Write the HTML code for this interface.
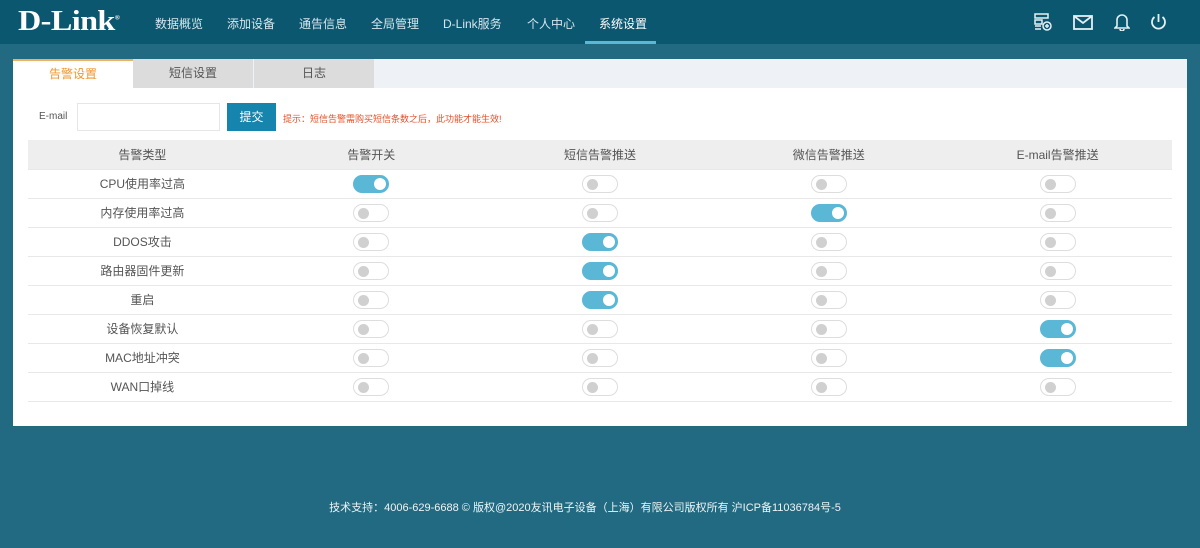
<!DOCTYPE html><html><head><meta charset="utf-8"><style>
*{margin:0;padding:0;box-sizing:border-box}
body{width:1200px;height:548px;background:#216a81;font-family:"Liberation Sans","Noto Sans CJK SC",sans-serif;position:relative;overflow:hidden}
.hd{position:absolute;left:0;top:0;width:1200px;height:44px;background:#0b5770}
.logo{position:absolute;left:18px;top:6px;color:#fff;font:bold 28px "Liberation Serif",serif;letter-spacing:-0.5px;transform:scaleX(1.15);transform-origin:left}
.nav{position:absolute;top:15px;font-size:12px;color:#d7e6ec}
.ul{position:absolute;left:585px;top:41px;width:71px;height:3px;background:#5cb6d4}
.ic{position:absolute;top:13px}
.panel{position:absolute;left:13px;top:59px;width:1174px;height:367px;background:#fff}
.tabs{position:absolute;left:0;top:0;width:1174px;height:29px;background:#eef1f5}
.tab{position:absolute;top:0;height:29px;width:120px;text-align:center;line-height:29px;font-size:12px;color:#555;background:#dcdcdc}
.lab{position:absolute;left:26px;top:52px;font-size:10px;color:#555}
.inp{position:absolute;left:64px;top:44px;width:143px;height:28px;border:1px solid #e6e6e6}
.btn{position:absolute;left:214px;top:44px;width:49px;height:28px;background:#1585ad;color:#fff;font-size:12px;text-align:center;line-height:28px}
.tip{position:absolute;left:270px;top:53px;font-size:9px;color:#e8502a}
table{position:absolute;left:15px;top:81px;width:1144px;border-collapse:collapse}
td,th{height:29px;width:20%;text-align:center;font-size:12px;color:#555;font-weight:normal;border-bottom:1px solid #e8e8e8;padding:0}
th{background:#eeeeee;height:29px}
.t{display:inline-block;vertical-align:middle;width:36px;height:18px;border-radius:9px;border:1px solid #ddd;background:#fff;position:relative}
.t:after{content:"";position:absolute;left:4px;top:3px;width:11px;height:11px;border-radius:50%;background:#d0d0d0}
.t.on{background:#5ab7d6;border-color:#5ab7d6}
.t.on:after{left:20px;background:#fff;width:12px;height:12px;top:2px}
.ft{position:absolute;top:499px;left:0;width:1170px;text-align:center;font-size:11px;color:#eef4f6}
</style></head><body>
<div class="hd">
<div class="logo">D-Link<sup style="font-size:6px">®</sup></div>
<span class="nav" style="left:155px">数据概览</span>
<span class="nav" style="left:227px">添加设备</span>
<span class="nav" style="left:299px">通告信息</span>
<span class="nav" style="left:371px">全局管理</span>
<span class="nav" style="left:443px">D-Link服务</span>
<span class="nav" style="left:527px">个人中心</span>
<span class="nav" style="left:599px;color:#fff">系统设置</span>
<div class="ul"></div>
<svg class="ic" style="left:1034px" width="18" height="18" viewBox="0 0 18 18" fill="none" stroke="#e4f0f4" stroke-width="1.5"><rect x="1" y="1" width="13" height="4"/><rect x="1" y="7" width="7" height="4"/><path d="M1 13h6M1 16h6"/><circle cx="13" cy="13" r="4"/><path d="M13 11v4M11 13h4"/></svg>
<svg class="ic" style="left:1073px;top:15px" width="20" height="15" viewBox="0 0 20 15" fill="none" stroke="#e4f0f4" stroke-width="1.8"><rect x="1" y="1" width="18" height="13"/><path d="M1 1l9 7 9-7"/></svg>
<svg class="ic" style="left:1114px" width="16" height="18" viewBox="0 0 16 18" fill="none" stroke="#e4f0f4" stroke-width="1.6"><path d="M3 13V7a5 5 0 0110 0v6l2 2H1z"/><path d="M6 16a2 2 0 004 0"/></svg>
<svg class="ic" style="left:1150px" width="17" height="18" viewBox="0 0 17 18" fill="none" stroke="#e4f0f4" stroke-width="1.8"><path d="M8.5 1v8"/><path d="M4.5 4a6.5 6.5 0 108 0"/></svg>
</div>
<div class="panel">
<div class="tabs">
<div class="tab" style="left:0;background:#fff;color:#f0962e;border-top:2px solid #f0b060;line-height:27px">告警设置</div>
<div class="tab" style="left:120px">短信设置</div>
<div class="tab" style="left:241px">日志</div>
</div>
<div class="lab">E-mail</div><div class="inp"></div><div class="btn">提交</div>
<div class="tip">提示：短信告警需购买短信条数之后，此功能才能生效!</div>
<table>
<tr><th>告警类型</th><th>告警开关</th><th>短信告警推送</th><th>微信告警推送</th><th>E-mail告警推送</th></tr>
<tr><td>CPU使用率过高</td><td><span class="t on"></span></td><td><span class="t"></span></td><td><span class="t"></span></td><td><span class="t"></span></td></tr>
<tr><td>内存使用率过高</td><td><span class="t"></span></td><td><span class="t"></span></td><td><span class="t on"></span></td><td><span class="t"></span></td></tr>
<tr><td>DDOS攻击</td><td><span class="t"></span></td><td><span class="t on"></span></td><td><span class="t"></span></td><td><span class="t"></span></td></tr>
<tr><td>路由器固件更新</td><td><span class="t"></span></td><td><span class="t on"></span></td><td><span class="t"></span></td><td><span class="t"></span></td></tr>
<tr><td>重启</td><td><span class="t"></span></td><td><span class="t on"></span></td><td><span class="t"></span></td><td><span class="t"></span></td></tr>
<tr><td>设备恢复默认</td><td><span class="t"></span></td><td><span class="t"></span></td><td><span class="t"></span></td><td><span class="t on"></span></td></tr>
<tr><td>MAC地址冲突</td><td><span class="t"></span></td><td><span class="t"></span></td><td><span class="t"></span></td><td><span class="t on"></span></td></tr>
<tr><td>WAN口掉线</td><td><span class="t"></span></td><td><span class="t"></span></td><td><span class="t"></span></td><td><span class="t"></span></td></tr>
</table>
</div>
<div class="ft">技术支持：4006-629-6688 © 版权@2020友讯电子设备（上海）有限公司版权所有 沪ICP备11036784号-5</div>
</body></html>
